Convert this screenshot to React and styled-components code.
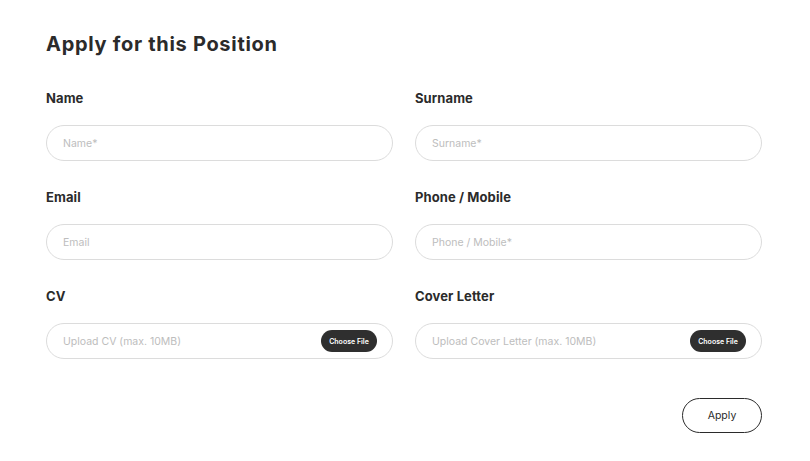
import React from "react";
import styled, { createGlobalStyle } from "styled-components";

const Global = createGlobalStyle`
  html, body { margin: 0; padding: 0; background: #fff; }
  body { font-family: Inter, "Noto Sans", sans-serif; color: #2b2b2b; }
`;

const Page = styled.div`
  padding: 31px 48px 0 46px;
`;

const Title = styled.h1`
  margin: 0 0 33px;
  font-size: 20px;
  line-height: 26px;
  font-weight: 700;
  color: #2b2b2b;
  letter-spacing: 0.7px;
`;

const Grid = styled.div`
  display: grid;
  grid-template-columns: 1fr 1fr;
  column-gap: 22px;
  row-gap: 28px;
`;

const Field = styled.div`
  display: flex;
  flex-direction: column;
  gap: 19px;
`;

const Label = styled.label`
  font-size: 13px;
  line-height: 16px;
  font-weight: 700;
  color: #2b2b2b;
  letter-spacing: 0.1px;
`;

const InputBox = styled.div`
  height: 36px;
  box-sizing: border-box;
  border: 1px solid #dcdcdc;
  border-radius: 18px;
  display: flex;
  align-items: center;
  justify-content: space-between;
  padding: 0 16px 0 16px;
`;

const Placeholder = styled.span`
  font-size: 10.5px;
  color: #bdbdbd;
`;

const ChooseButton = styled.span`
  background: #2f2f2f;
  color: #fff;
  font-size: 7px;
  font-weight: 600;
  height: 22px;
  width: 56px;
  border-radius: 11px;
  display: flex;
  align-items: center;
  justify-content: center;
  margin-right: -1px;
`;

const Footer = styled.div`
  display: flex;
  justify-content: flex-end;
  margin-top: 39px;
`;

const ApplyButton = styled.button`
  width: 80px;
  height: 35px;
  border: 1px solid #2b2b2b;
  border-radius: 18px;
  background: #fff;
  font-family: Inter, "Noto Sans", sans-serif;
  font-size: 10.5px;
  color: #2b2b2b;
`;

const fields = [
  { label: "Name", ph: "Name*" },
  { label: "Surname", ph: "Surname*" },
  { label: "Email", ph: "Email" },
  { label: "Phone / Mobile", ph: "Phone / Mobile*" },
  { label: "CV", ph: "Upload CV (max. 10MB)", file: true },
  { label: "Cover Letter", ph: "Upload Cover Letter (max. 10MB)", file: true },
];

export default function App() {
  return (
    <Page>
      <Global />
      <Title>Apply for this Position</Title>
      <Grid>
        {fields.map((f) => (
          <Field key={f.label}>
            <Label>{f.label}</Label>
            <InputBox>
              <Placeholder>{f.ph}</Placeholder>
              {f.file && <ChooseButton>Choose File</ChooseButton>}
            </InputBox>
          </Field>
        ))}
      </Grid>
      <Footer>
        <ApplyButton>Apply</ApplyButton>
      </Footer>
    </Page>
  );
}
